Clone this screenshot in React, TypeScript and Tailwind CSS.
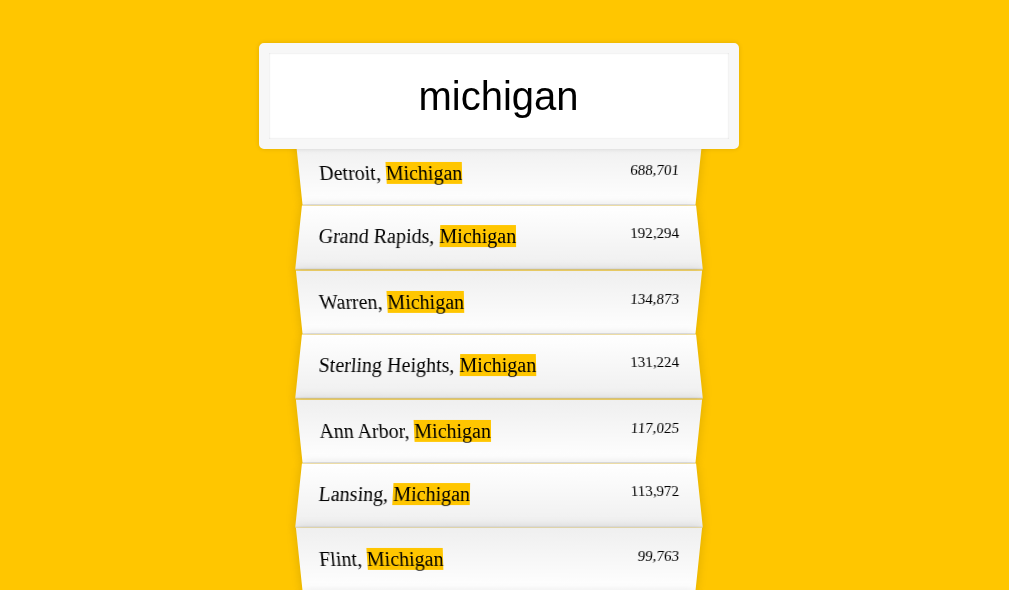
const cities = [
  { city: 'Detroit', state: 'Michigan', population: '688701' },
  { city: 'Grand Rapids', state: 'Michigan', population: '192294' },
  { city: 'Warren', state: 'Michigan', population: '134873' },
  { city: 'Sterling Heights', state: 'Michigan', population: '131224' },
  { city: 'Ann Arbor', state: 'Michigan', population: '117025' },
  { city: 'Lansing', state: 'Michigan', population: '113972' },
  { city: 'Flint', state: 'Michigan', population: '99763' },
  { city: 'Dearborn', state: 'Michigan', population: '95884' },
];

function withCommas(x: string) {
  return x.replace(/\B(?=(\d{3})+(?!\d))/g, ',');
}

export default function App() {
  const query = 'michigan';

  return (
    <div className="h-[590px] overflow-hidden bg-[#ffc600] font-['Liberation_Serif',serif] text-[20px] text-black">
      <div className="w-[997px]">
        <form className="mx-auto w-[400px] pt-[33px]">
          <input
            type="text"
            className="search relative -left-[10%] top-[10px] z-[2] m-0 box-border h-[106px] w-[120%] rounded-[5px] border-[10px] border-solid border-[#F7F7F7] bg-white p-5 text-center font-['Liberation_Sans',Arial,sans-serif] text-[40px] leading-[46px] text-black outline-0 shadow-[0_0_5px_rgba(0,0,0,0.12),inset_0_0_2px_rgba(0,0,0,0.19)]"
            defaultValue={query}
          />
          <ul className="relative m-0 p-0">
            {cities.map((place, i) => (
              <li
                key={place.city}
                className={
                  'flex list-none justify-between border-b border-[#D8D8D8] p-5 leading-[23.4px] capitalize shadow-[0_0_10px_rgba(0,0,0,0.14)] ' +
                  (i % 2 === 0
                    ? 'bg-[linear-gradient(to_top,#ffffff_0%,#EFEFEF_100%)] [transform:perspective(100px)_rotateX(-3deg)_translateY(3px)]'
                    : 'bg-[linear-gradient(to_bottom,#ffffff_0%,#EFEFEF_100%)] [transform:perspective(100px)_rotateX(3deg)_translateY(2px)_scale(1.001)]')
                }
              >
                <span className="name">
                  {place.city}, <span className="bg-[#ffc600]">{place.state}</span>
                </span>
                <span className="text-[15px] leading-[17px]">{withCommas(place.population)}</span>
              </li>
            ))}
          </ul>
        </form>
      </div>
    </div>
  );
}
